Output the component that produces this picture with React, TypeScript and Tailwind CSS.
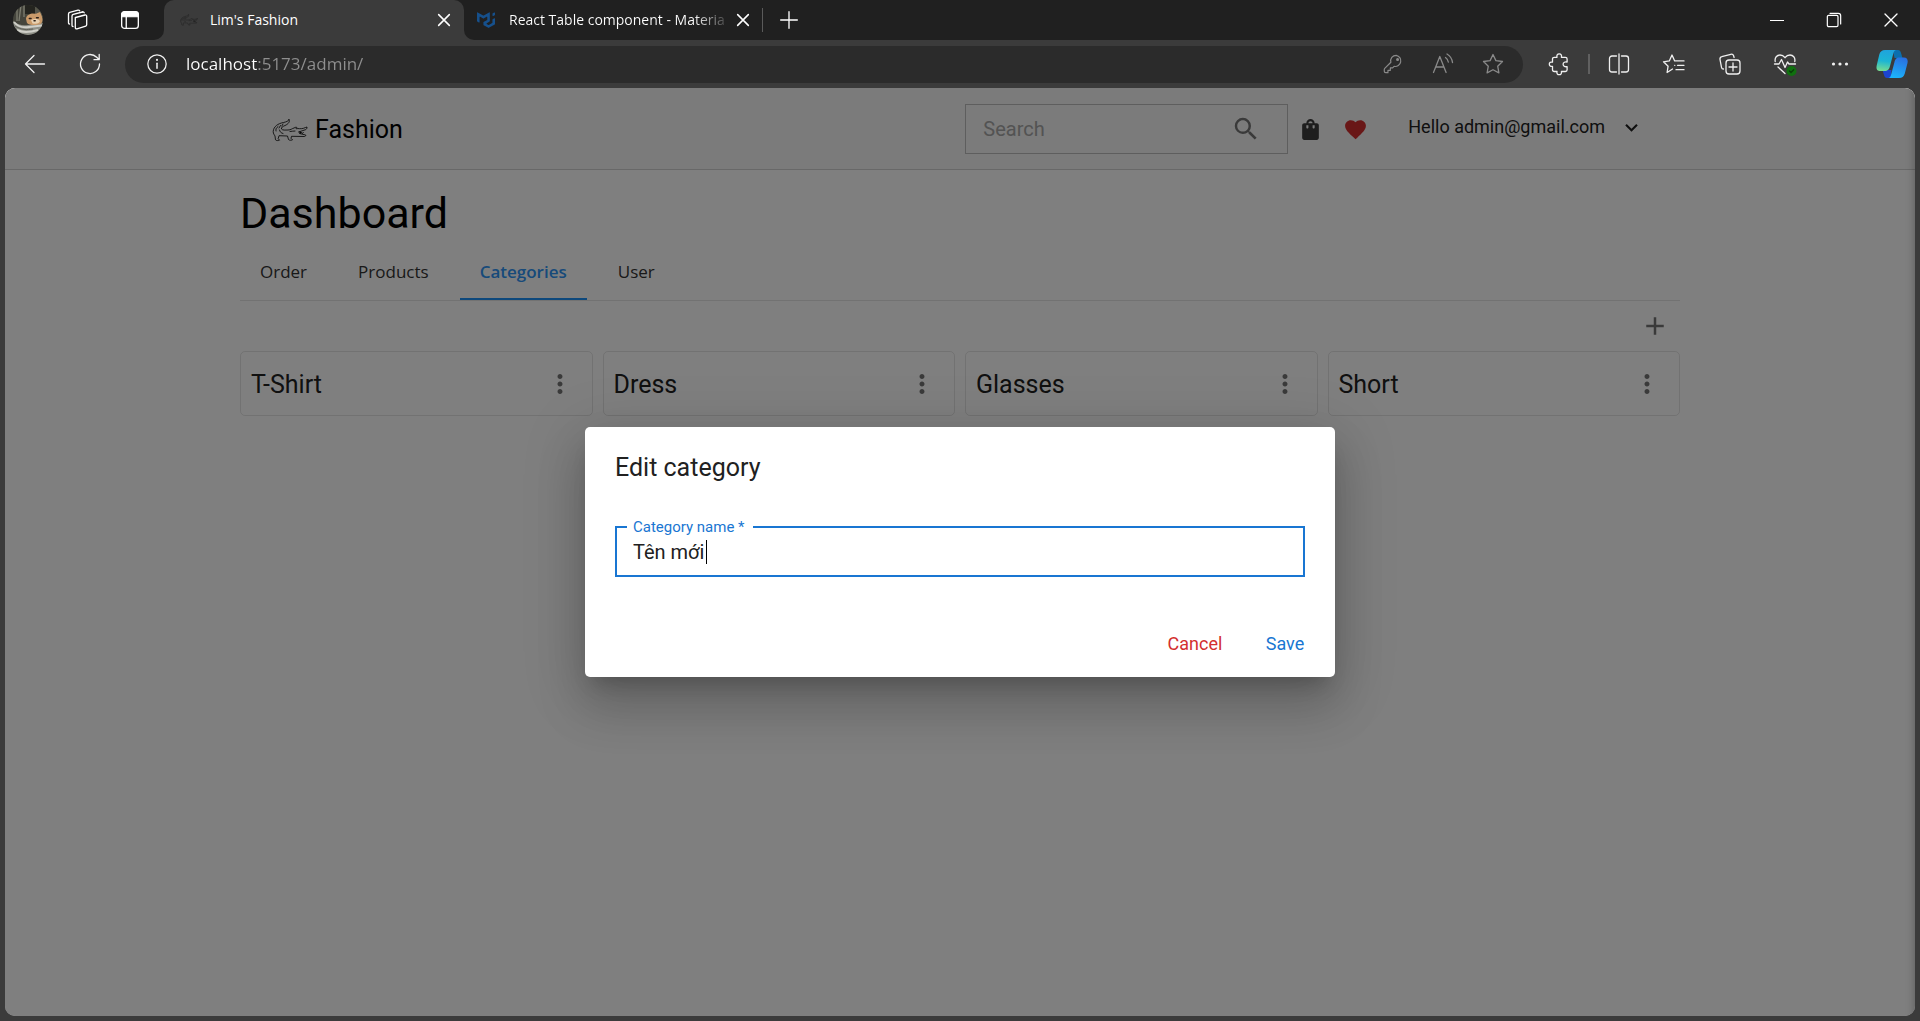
import React, { useState } from "react";
import {
  MdAdd,
  MdFavorite,
  MdKeyboardArrowDown,
  MdMoreVert,
  MdSearch,
  MdShoppingBag,
} from "react-icons/md";

type IconProps = { className?: string; children: React.ReactNode };

function Line({ className = "size-6", children }: IconProps) {
  return (
    <svg
      viewBox="0 0 24 24"
      fill="none"
      stroke="currentColor"
      strokeWidth="1.3"
      strokeLinecap="round"
      strokeLinejoin="round"
      className={className}
      aria-hidden="true"
    >
      {children}
    </svg>
  );
}

function Crocodile({ className }: { className: string }) {
  return (
    <svg
      viewBox="0 0 36 24"
      fill="none"
      stroke="currentColor"
      strokeWidth="0.8"
      strokeLinecap="round"
      strokeLinejoin="round"
      className={className}
      aria-hidden="true"
    >
      <path d="M17 1.500c1.300 2-.500 4.500-4 6C10.500 8.600 9 9.500 9.500 11c1 1.500 4 1 6.500 1 3 0 4-1.500 6-2 1-.300 1.500-1 2.500-.800l1 1.300c2.500.300 5 .500 8-1l1.500-.5c0 1.500-.500 2.200-1.500 2.700l-6 2" />
      <path d="M17 1.500c-.500 1.700-2.500 2.300-5.500 3C6 5.500 1.500 8.500 1.200 13.500c0 2.500 1.200 3.200 1.800 4.500l.500 3.800c.400.900 3.200 1 4 .400l-1.300-1.500.8-3 8.500.300 1 3.500c.600.900 3 1 4 .300l-1.500-1.500.5-2 13 .200c1-.200 1.500-1 1.200-1.500l-6.200-1.500 1.500-1.200-2.500-.300" />
      <path d="M6 8.500c-2 1.500-2.500 3-2 4.500M8.500 7.500 7 10M11 6l-1.200 2M7.500 12c.500 2 1.500 3 3.500 3.500M18 13.500c2-.200 3.500-.5 5-.5M28 14l.8 1.500.900-1.200.8 1.200.900-1M24 10.500l.8.300" />
    </svg>
  );
}

function Avatar() {
  return (
    <svg viewBox="0 0 30 30" className="size-[30px] rounded-full" aria-hidden="true">
      <rect width="30" height="30" fill="#45453c" />
      <path d="M4 0v16M8 0 6 16M11 0v12" stroke="#7d7d70" strokeWidth="1.300" />
      <path d="M12 0h10v9H12z" fill="#24241f" />
      <path d="M22 0h8v12h-8z" fill="#55554a" />
      <path d="M0 16c5 4 10 5 15 4l15-2v12H0z" fill="#8f9088" />
      <path d="M13 14c0-3 3-5 6-5.500l4 .3 4-1.800 1.500 3.500c1.500 3 1.500 7-1 8.500-4 1.500-11 1.500-13.500-1z" fill="#c99a6a" />
      <path d="M18 15c3-1.500 7-1.500 8.500.500s-3 4-7 3z" fill="#e8d0b0" />
      <path d="M16.300 13.500h1.800M23.500 12.800h1.800M21 15.800h1.200" stroke="#2a1f18" strokeWidth="1.400" strokeLinecap="round" />
      <path d="M1 17c4 5 9 6 15 5l13-1.500M4 25c6 3 14 2 21 0" stroke="#cfcfc8" strokeWidth="2" fill="none" />
      <path d="M2 21c6 4 12 4 18 3" stroke="#606159" strokeWidth="1" fill="none" />
    </svg>
  );
}

function CopilotLogo() {
  return (
    <svg viewBox="0 0 32 32" className="size-8" aria-hidden="true">
      <defs>
        <linearGradient id="copilotLeft" x1="10" y1="2" x2="7" y2="24" gradientUnits="userSpaceOnUse">
          <stop offset="0" stopColor="#1fa3dd" />
          <stop offset="0.500" stopColor="#1cb5d4" />
          <stop offset="1" stopColor="#7fe08a" />
        </linearGradient>
        <linearGradient id="copilotRight" x1="27" y1="9" x2="20" y2="30" gradientUnits="userSpaceOnUse">
          <stop offset="0" stopColor="#2a6de0" />
          <stop offset="1" stopColor="#1cb4fb" />
        </linearGradient>
      </defs>
      <path d="M17 2h5c1.800 0 2.400 1.200 3 3l1.500 5h-8z" fill="#0b6fae" />
      <path d="M15 30h-4c-1.800 0-2.400-1.200-3-3l-1.500-5h9z" fill="#1c44d0" />
      <path d="M9 2h11c-1.600.500-2.200 1.800-2.800 4l-3.200 12c-.700 2.600-1.700 5-5 5H4C1 23 0 20.800.700 17.500l2.600-11C4.100 3.500 6 2 9 2z" fill="url(#copilotLeft)" />
      <path d="M23 30H12.500c1.600-.500 2.200-1.800 2.800-4L18.500 14c.700-2.600 1.700-4.500 5-4.500H28c3 0 4.200 2.300 3.500 5.500l-2.700 10.500c-.900 3-2.600 4.500-5.800 4.500z" fill="url(#copilotRight)" />
    </svg>
  );
}

function BarButton({ label, className, children }: { label: string; className: string; children: React.ReactNode }) {
  return (
    <button type="button" aria-label={label} className={`flex shrink-0 items-center justify-center ${className}`}>
      {children}
    </button>
  );
}

function Cross({ className }: { className: string }) {
  return (
    <Line className={className}>
      <path d="m4 4 16 16M20 4 4 20" strokeWidth="2.300" />
    </Line>
  );
}

function TabStrip() {
  return (
    <div className="flex h-10 items-stretch bg-[#202020] text-white">
      <BarButton label="Profile" className="w-14">
        <Avatar />
      </BarButton>
      <BarButton label="Workspaces" className="w-11">
        <Line>
          <path d="m9.500 9.500 9.500-2.500c1-.200 1.700.300 1.700 1.200v8.500c0 .700-.400 1.200-1 1.400L11 20.800c-1 .200-1.700-.300-1.700-1.200V9.500z" />
          <path d="M7 18.500c-.700 0-1-.500-1-1V8c0-1 .5-1.500 1.200-1.700L16.500 4" />
          <path d="M3.500 16c-.700 0-1-.500-1-1V6c0-1 .5-1.500 1.200-1.700L12 2.200c.800-.200 1.300 0 1.700.600M16.500 4c.800-.200 1.300 0 1.700.800" />
        </Line>
      </BarButton>
      <BarButton label="Tab actions" className="w-[60px]">
        <Line className="size-5">
          <rect x="2" y="2" width="20" height="20" rx="3.500" strokeWidth="1.600" />
          <path d="M2 8V5.500C2 3.500 3.500 2 5.500 2h13C20.500 2 22 3.500 22 5.500V8z" fill="currentColor" />
          <path d="M7.500 8v14" strokeWidth="1.600" />
        </Line>
      </BarButton>
      <div className="relative ml-1 flex w-[300px] items-center rounded-t-[10px] bg-[#3b3b3b] pl-4">
        <span className="absolute bottom-0 -left-2.5 size-2.5 bg-[#3b3b3b]">
          <span className="block size-full rounded-br-[10px] bg-[#202020]" />
        </span>
        <span className="absolute -right-2.5 bottom-0 size-2.5 bg-[#3b3b3b]">
          <span className="block size-full rounded-bl-[10px] bg-[#202020]" />
        </span>
        <Crocodile className="h-3.5 w-[18px] text-[#1c1c1c]" />
        <span className="ml-3 flex-1 text-sm leading-5">Lim's Fashion</span>
        <BarButton label="Close tab" className="w-10">
          <Cross className="size-4" />
        </BarButton>
      </div>
      <div className="flex w-[298px] items-center pl-[13px]">
        <svg viewBox="0 0 36 32" className="h-4 w-[18px] shrink-0" aria-hidden="true">
          <path
            fill="#16508c"
            fillRule="evenodd"
            d="M30.343 21.976a1 1 0 0 0 .502-.864l.018-5.787a1 1 0 0 1 .502-.864l3.137-1.802a1 1 0 0 1 1.498.867v10.521a1 1 0 0 1-.502.867l-11.839 6.800a1 1 0 0 1-.994.001l-9.291-5.314a1 1 0 0 1-.504-.868v-5.305c0-.006.007-.010.013-.007.005.003.012 0 .012-.007v-.006c0-.004.002-.008.006-.010l7.652-4.396c.007-.004.004-.015-.004-.015a.008.008 0 0 1-.008-.008l.015-5.201a1 1 0 0 0-1.500-.87l-5.687 3.277a1 1 0 0 1-.998 0L6.666 9.700a1 1 0 0 0-1.499.866v9.400a1 1 0 0 1-1.496.869l-3.166-1.810a1 1 0 0 1-.504-.870l.028-16.430A1 1 0 0 1 1.527.860l10.845 6.229a1 1 0 0 0 .996 0L24.210.860a1 1 0 0 1 1.498.868v16.434a1 1 0 0 1-.501.867l-5.678 3.270a1 1 0 0 0 .004 1.735l3.132 1.783a1 1 0 0 0 .993-.002l6.685-3.839zM31 7.234a1 1 0 0 0 1.514.857l3-1.800A1 1 0 0 0 36 5.434V1.766A1 1 0 0 0 34.486.909l-3 1.800a1 1 0 0 0-.486.857v3.668z"
          />
        </svg>
        <span className="ml-3.5 flex-1 bg-linear-to-r from-white from-85% to-[#404040] bg-clip-text text-sm leading-5 whitespace-nowrap text-transparent">
          React Table component - Materia
        </span>
        <BarButton label="Close tab" className="mr-[3px] w-8">
          <Cross className="size-4" />
        </BarButton>
      </div>
      <span className="my-2 w-px bg-[#5a5a5a]" />
      <BarButton label="New tab" className="w-[52px]">
        <Line className="size-5">
          <path d="M12 2v20M2 12h20" strokeWidth="1.600" />
        </Line>
      </BarButton>
      <div className="ml-auto flex">
        <BarButton label="Minimize" className="w-[57px]">
          <span className="h-px w-3.5 bg-white" />
        </BarButton>
        <BarButton label="Restore" className="w-[57px]">
          <Line className="size-4">
            <rect x="2" y="5" width="16" height="17" rx="2" strokeWidth="1.800" />
            <path d="M6 2h12.500c2 0 3.500 1.500 3.500 3.500V18" strokeWidth="1.800" />
          </Line>
        </BarButton>
        <BarButton label="Close window" className="w-[58px]">
          <Line className="size-4">
            <path d="m3 3 18 18M21 3 3 21" strokeWidth="2" />
          </Line>
        </BarButton>
      </div>
    </div>
  );
}

const starPath =
  "m12 2.500 2.900 6.100 6.600.900-4.800 4.700 1.200 6.700L12 17.700l-5.900 3.200 1.200-6.700L2.500 9.500l6.600-.900z";

function Toolbar() {
  return (
    <div className="flex h-12 items-center bg-[#3b3b3b] pl-[7px] text-[#f0f0f0]">
      <BarButton label="Back" className="h-10 w-[55px]">
        <Line>
          <path d="M21.500 12H2.500M11 3.500 2.500 12l8.500 8.500" />
        </Line>
      </BarButton>
      <BarButton label="Refresh" className="h-10 w-[55px]">
        <Line>
          <path d="M21.500 12a9.500 9.500 0 1 1-2.800-6.700l2.300 2.200M21.200 2.500v5.200H16" />
        </Line>
      </BarButton>
      <div className="ml-2 flex h-[37px] flex-1 items-center rounded-full bg-[#2b2b2b] pr-[5px]">
        <BarButton label="View site information" className="ml-1 h-9 w-14">
          <Line className="size-5">
            <circle cx="12" cy="12" r="11" strokeWidth="1.500" />
            <path d="M12 11v6" strokeWidth="1.800" />
            <path d="M12 7v.2" strokeWidth="2.400" />
          </Line>
        </BarButton>
        <input
          aria-label="Address"
          defaultValue="localhost:5173/admin/"
          className="min-w-0 flex-1 bg-linear-to-r from-white from-[73px] to-[#8f8f8f] to-[73px] bg-clip-text pl-px text-[17px] leading-6 text-transparent outline-none"
        />
        <div className="flex text-[#8a8a8a]">
          <BarButton label="Passwords" className="h-9 w-[50px]">
            <Line className="size-[22px]">
              <path d="M15.500 2.500a6 6 0 0 0-5.800 7.600L3 16.800c-.300.300-.500.700-.5 1.100V20c0 .800.700 1.500 1.500 1.500h2.500v-2.600h2.600v-2.600h2.500l1.600-1.700a6 6 0 1 0 2.300-12.100z" />
              <circle cx="17" cy="7" r="1" fill="currentColor" />
            </Line>
          </BarButton>
          <BarButton label="Read aloud" className="h-9 w-[50px]">
            <Line>
              <path d="M2.500 20.500 8.800 4.500l6.300 16M4.800 15h8M14.500 5.500c1.700 1.200 2.500 2.700 2.800 4.500M16 2c3 1.800 5 4.500 5.500 8.500" />
            </Line>
          </BarButton>
          <BarButton label="Add to favorites" className="h-9 w-[50px]">
            <Line>
              <path d={starPath} />
            </Line>
          </BarButton>
        </div>
      </div>
      <BarButton label="Extensions" className="ml-2 h-10 w-14">
        <Line>
          <path d="M5.500 7c0-1 .700-1.700 1.700-1.700H10c-.600-2 .4-3.500 2.200-3.500s2.800 1.500 2.200 3.500h4c1 0 1.700.700 1.700 1.700v3c-2-.500-4 .3-4 2.300s2 2.800 4 2.300v3.200c0 1-.700 1.700-1.700 1.700h-4c.500 1.800-.500 3.200-2.200 3.200S9.500 21.300 10 19.500H7.200c-1 0-1.700-.700-1.700-1.700v-3.500c-2 .400-3.200-.600-3.200-2.200S3.500 9.700 5.500 10.200z" />
        </Line>
      </BarButton>
      <span className="mx-px h-5 w-0.5 bg-[#606060]" />
      <BarButton label="Split screen" className="h-10 w-[55px]">
        <Line>
          <path d="M9.500 4H5C3.600 4 2.500 5.100 2.500 6.500v11C2.500 18.900 3.600 20 5 20h4.500M14.500 4H19c1.400 0 2.500 1.100 2.500 2.500v11c0 1.400-1.100 2.500-2.500 2.500h-4.500M12 2v20" />
        </Line>
      </BarButton>
      <BarButton label="Favorites" className="h-10 w-14">
        <Line>
          <path d="m10.500 17-5.400 3.500 1-6.300L1.500 9.800l5.800-.900L10 3l2.700 5.900H22M15.500 13.300H22M14 17.700h8M12.700 13.300h.1" />
        </Line>
      </BarButton>
      <BarButton label="Collections" className="h-10 w-[55px]">
        <Line>
          <rect x="8" y="8" width="14" height="14" rx="3" />
          <path d="M15 11v8M11 15h8M5.500 17c-1 0-1.800-.700-2-1.700L2 7.500C1.800 6 2.500 5 3.800 4.700l9-2.400c1.300-.300 2.400.300 2.800 1.500l.500 1.700" />
        </Line>
      </BarButton>
      <BarButton label="Browser essentials" className="h-10 w-[55px]">
        <Line>
          <path d="M2.200 9.500C1.500 5.500 4 3 7 3c2.200 0 3.700 1 5 2.700C13.300 4 14.800 3 17 3c3 0 5.500 2.500 4.800 6.500M1.500 12H6l2.500-4.500 3.500 8L14.500 10l1.500 2h6.500M5 15l7 6.500" />
          <circle cx="18.500" cy="19" r="5" fill="#10700f" stroke="none" />
          <path d="m16.500 19 1.500 1.500 2.700-2.700" stroke="#0a3d0a" />
        </Line>
      </BarButton>
      <BarButton label="Settings and more" className="h-10 w-[55px]">
        <svg viewBox="0 0 24 24" fill="currentColor" className="size-6" aria-hidden="true">
          <circle cx="5.500" cy="12" r="1.600" />
          <circle cx="12" cy="12" r="1.600" />
          <circle cx="18.500" cy="12" r="1.600" />
        </svg>
      </BarButton>
      <BarButton label="Copilot" className="mr-1 ml-px h-10 w-12">
        <CopilotLogo />
      </BarButton>
    </div>
  );
}

function SiteHeader() {
  return (
    <header className="border-b border-black/15 bg-[#f6f6f6] pt-4 pb-[15px]">
      <div className="mx-auto flex max-w-[1440px] items-center justify-between px-8">
        <a href="#home" className="flex items-center gap-[7px] pt-0.5 text-[25px] leading-8 text-black">
          <Crocodile className="h-6 w-9" />
          Fashion
        </a>
        <div className="mr-1 flex items-center">
          <div className="flex h-[50px] w-[323px] items-center border border-[#bdbdbd] pr-[26px] pl-[17px]">
            <input
              aria-label="Search"
              placeholder="Search"
              className="min-w-0 flex-1 bg-transparent text-xl leading-7 outline-none placeholder:text-[#a6a6a6]"
            />
            <button type="button" aria-label="Search" className="text-[#757575]">
              <MdSearch className="size-[30px]" />
            </button>
          </div>
          <button type="button" aria-label="Cart" className="ml-2.5 text-[#3c3c3c]">
            <MdShoppingBag className="size-[25px]" />
          </button>
          <button type="button" aria-label="Favourites" className="ml-5 text-[#d32f2f]">
            <MdFavorite className="size-[25px]" />
          </button>
          <button type="button" className="ml-10 flex items-center gap-3.5 pb-1 text-lg leading-6 text-[#212121]">
            Hello admin@gmail.com
            <MdKeyboardArrowDown className="size-[25px]" />
          </button>
        </div>
      </div>
    </header>
  );
}

const tabs = ["Order", "Products", "Categories", "User"];
const categories = ["T-Shirt", "Dress", "Glasses", "Short"];

function Dashboard() {
  return (
    <main className="mx-auto w-full max-w-[1440px] pt-[17px]">
      <h1 className="text-[43px] leading-[52px] text-black">Dashboard</h1>
      <div role="tablist" className="mt-1.5 flex gap-[11px] border-b border-black/10 font-['Open_Sans',sans-serif] text-[17px] leading-6">
        {tabs.map((tab) => {
          const active = tab === "Categories";
          return (
            <button
              key={tab}
              type="button"
              role="tab"
              aria-selected={active}
              className={
                active
                  ? "h-[55px] border-b-2 border-[#1a90f8] px-5 font-semibold text-[#2f94f4]"
                  : "h-[55px] border-b-2 border-transparent px-5 text-[#333333]"
              }
            >
              {tab}
            </button>
          );
        })}
      </div>
      <div className="flex justify-end">
        <button type="button" aria-label="Add category" className="flex size-[50px] items-center justify-center text-[#757575]">
          <MdAdd className="size-[30px]" />
        </button>
      </div>
      <div className="grid grid-cols-4 gap-2.5">
        {categories.map((name) => (
          <section key={name} className="flex h-[65px] items-center justify-between rounded-[5px] border border-black/10 pr-[7px] pl-2.5">
            <h2 className="pt-0.5 text-[25px] leading-8 text-[#212121]">{name}</h2>
            <button type="button" aria-label={`${name} options`} className="flex size-[50px] items-center justify-center text-[#757575]">
              <MdMoreVert className="size-[30px]" />
            </button>
          </section>
        ))}
      </div>
    </main>
  );
}

function EditDialog() {
  const [name, setName] = useState("Tên mới");
  return (
    <div className="absolute inset-0 flex items-center justify-center bg-black/50 shadow-[inset_-10px_0_10px_-10px_rgba(0,0,0,0.3)]">
      <form
        role="dialog"
        aria-labelledby="dialog-title"
        className="w-full max-w-[750px] rounded-[5px] bg-white shadow-[0_14px_19px_-9px_rgba(0,0,0,0.2),0_30px_48px_4px_rgba(0,0,0,0.14),0_11px_58px_10px_rgba(0,0,0,0.12)]"
      >
        <h2 id="dialog-title" className="px-[30px] pt-[21px] pb-[19px] text-[25px] leading-10 text-[#212121]">
          Edit category
        </h2>
        <div className="px-[30px] pt-[19px] pb-[34px]">
          <div className="relative">
            <input
              id="category-name"
              required
              value={name}
              onChange={(event) => setName(event.target.value)}
              className="block h-[51px] w-full border-2 border-[#1976d2] px-4 text-xl leading-7 text-[#212121] outline-none"
            />
            <label htmlFor="category-name" className="absolute -top-[9px] left-3 bg-white pr-2 pl-1.5 text-[15px] leading-5 text-[#1976d2]">
              Category name *
            </label>
            <span aria-hidden="true" className="absolute top-3.5 left-[91px] h-6 w-px bg-black" />
          </div>
        </div>
        <div className="flex justify-end gap-2.5 p-2.5">
          <button type="button" className="h-[46px] min-w-20 px-2.5 text-lg leading-6 text-[#d32f2f]">
            Cancel
          </button>
          <button type="button" className="h-[46px] min-w-20 px-2.5 text-lg leading-6 text-[#1976d2]">
            Save
          </button>
        </div>
      </form>
    </div>
  );
}

export default function App() {
  return (
    <div className="flex min-h-screen flex-col bg-[#3b3b3b] font-['Open_Sans',sans-serif]">
      <TabStrip />
      <Toolbar />
      <div className="relative mx-[5px] mb-[5px] flex-1 overflow-hidden rounded-[10px] bg-white font-[Roboto,sans-serif]">
        <SiteHeader />
        <Dashboard />
        <EditDialog />
      </div>
    </div>
  );
}
